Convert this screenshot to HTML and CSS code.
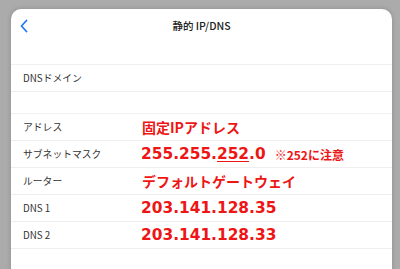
FILE: index.html
```html
<!DOCTYPE html>
<html lang="ja">
<head>
<meta charset="utf-8">
<link rel="stylesheet" href="styles.css">
</head>
<body>
<div class="card">
  <div class="header">
    <svg class="back" width="10" height="14" viewBox="0 0 10 14"><path d="M7.5 1.5 L2.5 7 L7.5 12.5" fill="none" stroke="#1f7cf0" stroke-width="1.8" stroke-linecap="round" stroke-linejoin="round"/></svg>
    <div class="title">静的 IP/DNS</div>
  </div>
  <div class="list first">
    <div class="row"><span class="label">DNSドメイン</span><span></span></div>
  </div>
  <div class="list second">
    <div class="row"><span class="label">アドレス</span><span class="val jp">固定IPアドレス</span></div>
    <div class="row"><span class="label">サブネットマスク</span><span class="val num">255.255.<u>252</u>.0<span class="note">※252に注意</span></span></div>
    <div class="row"><span class="label">ルーター</span><span class="val jp">デフォルトゲートウェイ</span></div>
    <div class="row"><span class="label">DNS 1</span><span class="val num">203.141.128.35</span></div>
    <div class="row"><span class="label">DNS 2</span><span class="val num">203.141.128.33</span></div>
  </div>
</div>
</body>
</html>
```
FILE: styles.css
```css
html, body {
  margin: 0;
  padding: 0;
  background: #ababab;
  height: 269px;
  overflow: hidden;
}
.card {
  margin: 9px 0 0 11px;
  width: 381px;
  height: 270px;
  background: #fff;
  border-radius: 10px 10px 0 0;
  box-shadow: 0 0 5px rgba(0,0,0,0.18);
  font-family: "Noto Sans CJK JP", "Noto Sans", sans-serif;
}
.header {
  position: relative;
  height: 33px;
  display: flex;
  align-items: center;
  justify-content: center;
}
.back {
  position: absolute;
  left: 8px;
  top: 10px;
}
.title {
  font-size: 10.5px;
  font-weight: 500;
  color: #222;
}
.list.first {
  margin-top: 22px;
  border-top: 1px solid #f0f0f0;
}
.list.second {
  margin-top: 21px;
  border-top: 1px solid #f0f0f0;
}
.row {
  display: grid;
  grid-template-columns: 118px 1fr;
  align-items: center;
  height: 26px;
  padding-left: 12px;
  border-bottom: 1px solid #eeeeee;
}
.label {
  font-size: 9.8px;
  color: #333;
}
.val {
  color: #ee1515;
  font-weight: 700;
  white-space: nowrap;
}
.val.jp {
  font-size: 14px;
  padding-left: 1px;
}
.val.num {
  font-family: "DejaVu Sans", sans-serif;
  font-size: 15.4px;
  display: flex;
  align-items: center;
}
.val.num u {
  text-decoration-thickness: 1px;
  text-underline-offset: 2px;
}
.note {
  font-family: "Noto Sans CJK JP", sans-serif;
  font-size: 12px;
  margin-left: 9px;
  font-weight: 700;
}
```
